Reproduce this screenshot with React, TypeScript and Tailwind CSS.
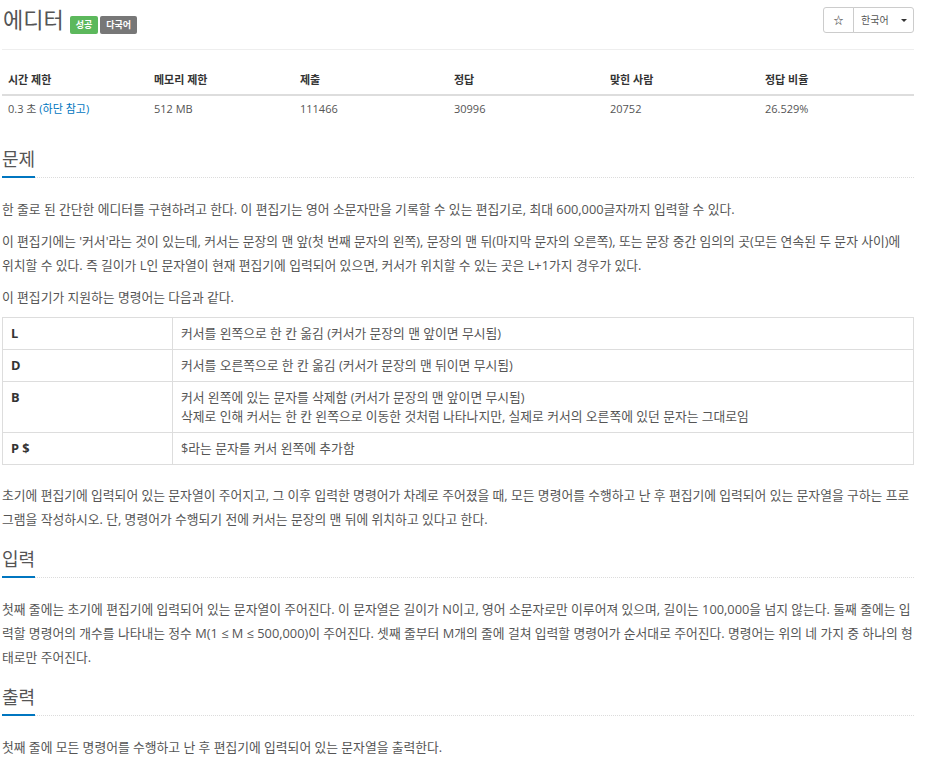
import React from 'react';

const font = { fontFamily: '"Open Sans", "Noto Sans CJK KR", sans-serif' };

const commands = [
  { key: 'L', desc: ['커서를 왼쪽으로 한 칸 옮김 (커서가 문장의 맨 앞이면 무시됨)'] },
  { key: 'D', desc: ['커서를 오른쪽으로 한 칸 옮김 (커서가 문장의 맨 뒤이면 무시됨)'] },
  {
    key: 'B',
    desc: [
      '커서 왼쪽에 있는 문자를 삭제함 (커서가 문장의 맨 앞이면 무시됨)',
      '삭제로 인해 커서는 한 칸 왼쪽으로 이동한 것처럼 나타나지만, 실제로 커서의 오른쪽에 있던 문자는 그대로임',
    ],
  },
  { key: 'P $', desc: ['$라는 문자를 커서 왼쪽에 추가함'] },
];

function Headline({ title }: { title: string }) {
  return (
    <div className="mt-[16px] mb-[19px] border-b border-dotted border-[#dcdcdc]">
      <h2 className="inline-block -mb-px border-b-2 border-[#0076c0] pb-[5px] text-[18px] leading-[24px] text-[#555]">
        {title}
      </h2>
    </div>
  );
}

export default function App() {
  return (
    <div className="w-[914px] pl-[2px] bg-white text-[#555]" style={font}>
      {/* title bar */}
      <div className="flex h-[50px] items-start justify-between border-b border-[#eee]">
        <div className="flex items-start">
          <h1 className="pl-px pt-[3px] text-[22px] leading-[32px] text-[#555]">에디터</h1>
          <span className="ml-[6px] mt-[16px] flex h-[18px] items-center rounded-[2px] bg-[#5cb85c] px-[6px] text-[9px] font-bold text-white">
            성공
          </span>
          <span className="ml-[2px] mt-[16px] flex h-[18px] items-center rounded-[2px] bg-[#777] px-[6px] text-[9px] font-bold text-white">
            다국어
          </span>
        </div>
        <div className="mt-[7px] flex h-[26px]">
          <button className="flex w-[31px] items-center justify-center rounded-l-[3px] border border-[#ccc] text-[10px] text-[#333]">
            ☆
          </button>
          <button className="-ml-px flex w-[61px] items-center gap-[12px] rounded-r-[3px] border border-[#ccc] pl-[7px] text-[10px] text-[#555]">
            한국어
            <span className="h-0 w-0 border-x-[3px] border-t-[3px] border-x-transparent border-t-[#333]" />
          </button>
        </div>
      </div>

      {/* limits table */}
      <div className="mt-[16px] text-[11px]">
        <div className="grid h-[30px] grid-cols-[146px_146px_154px_156px_155px_1fr] items-center border-b-2 border-[#ddd] px-[6px] font-bold text-[#333]">
          <div>시간 제한</div>
          <div>메모리 제한</div>
          <div>제출</div>
          <div>정답</div>
          <div>맞힌 사람</div>
          <div>정답 비율</div>
        </div>
        <div className="grid h-[27px] grid-cols-[146px_146px_154px_156px_155px_1fr] items-center px-[6px]">
          <div>
            0.3 초 <span className="text-[#0076c0]">(하단 참고)</span>
          </div>
          <div>512 MB</div>
          <div>111466</div>
          <div>30996</div>
          <div>20752</div>
          <div>26.529%</div>
        </div>
      </div>

      <div className="mt-[24px] text-[12.8px] leading-[24px]">
        <Headline title="문제" />
        <p className="mb-[8px]">
          한 줄로 된 간단한 에디터를 구현하려고 한다. 이 편집기는 영어 소문자만을 기록할 수 있는 편집기로, 최대
          600,000글자까지 입력할 수 있다.
        </p>
        <p className="mb-[8px]">
          이 편집기에는 '커서'라는 것이 있는데, 커서는 문장의 맨 앞(첫 번째 문자의 왼쪽), 문장의 맨 뒤(마지막 문자의
          오른쪽), 또는 문장 중간 임의의 곳(모든 연속된 두 문자 사이)에 위치할 수 있다. 즉 길이가 L인 문자열이 현재
          편집기에 입력되어 있으면, 커서가 위치할 수 있는 곳은 L+1가지 경우가 있다.
        </p>
        <p className="mb-[8px]">이 편집기가 지원하는 명령어는 다음과 같다.</p>

        <table className="mb-[18px] w-[912px] border-collapse border border-[#ddd] leading-[19px]">
          <tbody>
            {commands.map((c) => (
              <tr key={c.key}>
                <td className="w-[170px] border border-[#ddd] px-[8px] py-[6px] align-top font-bold text-[#333]">
                  {c.key}
                </td>
                <td className="border border-[#ddd] px-[8px] py-[6px]">
                  {c.desc.map((line, i) => (
                    <div key={i}>{line}</div>
                  ))}
                </td>
              </tr>
            ))}
          </tbody>
        </table>

        <p className="mb-[8px]">
          초기에 편집기에 입력되어 있는 문자열이 주어지고, 그 이후 입력한 명령어가 차례로 주어졌을 때, 모든 명령어를
          수행하고 난 후 편집기에 입력되어 있는 문자열을 구하는 프로그램을 작성하시오. 단, 명령어가 수행되기 전에
          커서는 문장의 맨 뒤에 위치하고 있다고 한다.
        </p>

        <Headline title="입력" />
        <p className="mb-[8px]">
          첫째 줄에는 초기에 편집기에 입력되어 있는 문자열이 주어진다. 이 문자열은 길이가 N이고, 영어 소문자로만
          이루어져 있으며, 길이는 100,000을 넘지 않는다. 둘째 줄에는 입력할 명령어의 개수를 나타내는 정수 M(1 ≤ M ≤
          500,000)이 주어진다. 셋째 줄부터 M개의 줄에 걸쳐 입력할 명령어가 순서대로 주어진다. 명령어는 위의 네 가지
          중 하나의 형태로만 주어진다.
        </p>

        <Headline title="출력" />
        <p className="mb-[8px]">첫째 줄에 모든 명령어를 수행하고 난 후 편집기에 입력되어 있는 문자열을 출력한다.</p>
      </div>
    </div>
  );
}
